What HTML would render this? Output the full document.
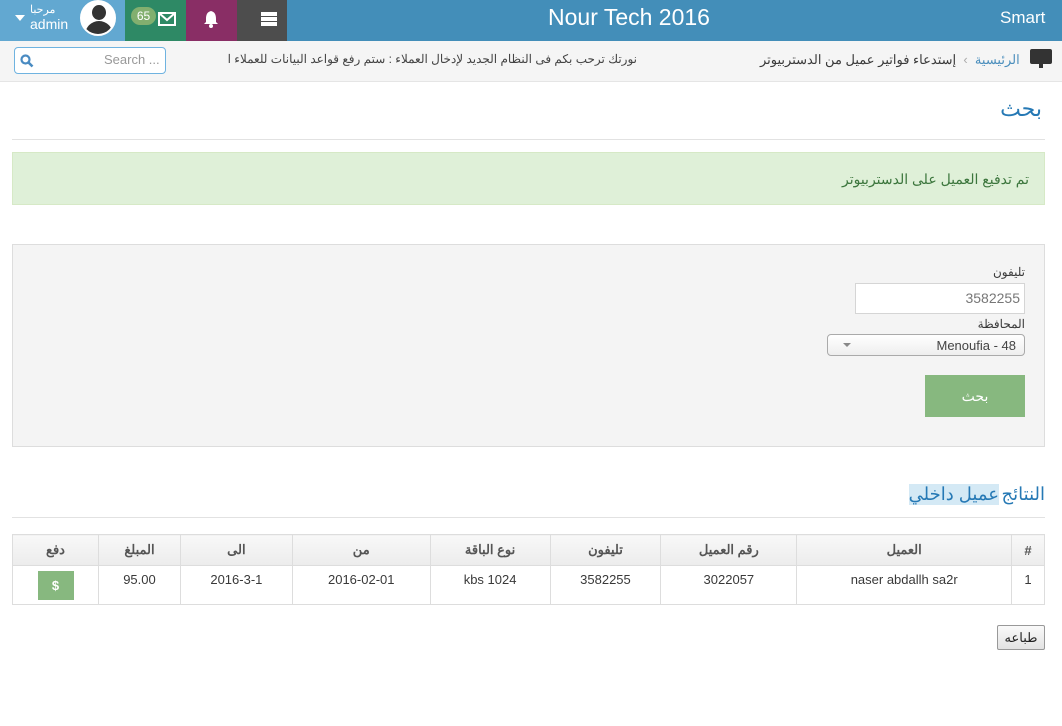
<!DOCTYPE html>
<html><head><meta charset="utf-8"><style>
*{box-sizing:border-box;margin:0;padding:0}
body{width:1062px;height:726px;overflow:hidden;background:#fff;font-family:"Liberation Sans","Noto Sans CJK SC",sans-serif;font-size:13px;color:#393939;position:relative}
.abs{position:absolute}
.hdr{left:0;top:0;width:1062px;height:41px;background:#438eb9}
table{border-collapse:collapse;position:absolute;left:12px;top:534px;width:1033px;direction:rtl}
td,th{border:1px solid #ddd;text-align:center;font-size:13px}
th{height:31px;background:linear-gradient(#f8f8f8,#ececec);font-weight:bold;color:#555}
td{height:39px;background:#fff}
</style></head><body>
<div class="abs hdr"></div>
<div class="abs" style="left:0;top:0;width:125px;height:41px;background:#62a8d1"></div>
<div class="abs" style="left:15px;top:15px;width:0;height:0;border-left:5px solid transparent;border-right:5px solid transparent;border-top:6px solid #fff"></div>
<div class="abs" style="left:30px;top:4px;color:#fff;font-size:11px;line-height:12px">مرحبا</div>
<div class="abs" style="left:30px;top:16px;color:#fff;font-size:14px">admin</div>
<div class="abs" style="left:80px;top:0;width:36px;height:36px;border-radius:50%;background:#fff;border:2px solid #fff;overflow:hidden">
<div class="abs" style="left:10px;top:3px;width:14px;height:15px;border-radius:50%;background:#333"></div>
<div class="abs" style="left:3px;top:19px;width:28px;height:20px;border-radius:14px 14px 0 0;background:#333"></div></div>
<div class="abs" style="left:125px;top:0;width:61px;height:41px;background:#2e8965"></div>
<div class="abs" style="left:131px;top:7px;width:25px;height:18px;border-radius:9px;background:#82af6f;color:#fff;font-size:12px;text-align:center;line-height:18px">65</div>
<svg class="abs" style="left:158px;top:12px" width="18" height="14" viewBox="0 0 18 14"><rect x="1" y="1" width="16" height="12" fill="none" stroke="#fff" stroke-width="2"/><path d="M1 1 L9 8 L17 1" fill="none" stroke="#fff" stroke-width="2"/></svg>
<div class="abs" style="left:186px;top:0;width:51px;height:41px;background:#892e65"></div>
<svg class="abs" style="left:203px;top:11px" width="16" height="17" viewBox="0 0 16 17"><path d="M8 0 C4 1 3 4 3 8 L3 11 L1 13 L15 13 L13 11 L13 8 C13 4 12 1 8 0Z" fill="#fff"/><circle cx="8" cy="15" r="2" fill="#fff"/></svg>
<div class="abs" style="left:237px;top:0;width:50px;height:41px;background:#4d4d4d"></div>
<div class="abs" style="left:261px;top:12px;width:16px;height:4px;background:#fff"></div>
<div class="abs" style="left:261px;top:17px;width:16px;height:4px;background:#fff"></div>
<div class="abs" style="left:261px;top:22px;width:16px;height:4px;background:#fff"></div>
<div class="abs" style="left:548px;top:4px;color:#fff;font-size:23px">Nour Tech 2016</div>
<div class="abs" style="left:1000px;top:8px;color:#fff;font-size:17px">Smart</div>
<div class="abs" style="left:0;top:41px;width:1062px;height:41px;background:#f5f5f5;border-bottom:1px solid #e5e5e5"></div>
<div class="abs" style="left:14px;top:47px;width:152px;height:27px;border:1px solid #6fb3e0;border-radius:4px;background:#fff"></div>
<svg class="abs" style="left:20px;top:54px" width="14" height="14" viewBox="0 0 14 14"><circle cx="5.5" cy="5.5" r="4" fill="none" stroke="#4a8bc2" stroke-width="2.2"/><path d="M8.5 8.5 L12.5 12.5" stroke="#4a8bc2" stroke-width="2.6"/></svg>
<div class="abs" style="left:104px;top:52px;color:#999;font-size:13px">Search ...</div>
<div class="abs" style="left:205px;top:52px;font-size:12px;color:#444;direction:rtl;width:432px;white-space:nowrap;overflow:hidden">نورتك ترحب بكم فى النظام الجديد لإدخال العملاء : ستم رفع قواعد البيانات للعملاء ا</div>
<div class="abs" style="left:1030px;top:49px;width:22px;height:15px;background:#333;border-radius:2px"></div>
<div class="abs" style="left:1039px;top:63px;width:4px;height:5px;background:#333"></div>
<div class="abs" style="left:760px;top:52px;font-size:13px;direction:rtl;white-space:nowrap"><span style="color:#4c8fbd">الرئيسية</span> <span style="color:#aaa">&nbsp;›&nbsp;</span> إستدعاء فواتير عميل من الدستربيوتر</div>
<div class="abs" style="right:20px;top:96px;color:#2679b5;font-size:22px;direction:rtl">بحث</div>
<div class="abs" style="left:12px;top:139px;width:1033px;height:1px;background:#e2e2e2"></div>
<div class="abs" style="left:12px;top:152px;width:1033px;height:53px;background:#dff0d8;border:1px solid #d6e9c6"></div>
<div class="abs" style="right:33px;top:171px;color:#3c763d;font-size:14px;direction:rtl">تم تدفيع العميل على الدستربيوتر</div>
<div class="abs" style="left:12px;top:244px;width:1033px;height:203px;background:#f4f4f4;border:1px solid #ddd"></div>
<div class="abs" style="right:37px;top:265px;font-size:12px;direction:rtl">تليفون</div>
<div class="abs" style="left:855px;top:283px;width:170px;height:31px;background:#fff;border:1px solid #d5d5d5;text-align:right;padding:6px 4px;color:#777;font-size:14px">3582255</div>
<div class="abs" style="right:37px;top:317px;font-size:12px;direction:rtl">المحافظة</div>
<div class="abs" style="left:827px;top:334px;width:198px;height:22px;background:linear-gradient(#fff,#eee);border:1px solid #aaa;border-radius:4px;text-align:right;padding:3px 8px;font-size:13px;color:#444">Menoufia - 48</div>
<div class="abs" style="left:843px;top:343px;border-left:4px solid transparent;border-right:4px solid transparent;border-top:4px solid #888"></div>
<div class="abs" style="left:925px;top:375px;width:100px;height:42px;background:#87b87f;color:#fff;text-align:center;line-height:42px;font-size:14px">بحث</div>
<div class="abs" style="right:17px;top:484px;font-size:18px;direction:rtl;color:#2679b5;white-space:nowrap">النتائج</div>
<div class="abs" style="right:63px;top:484px;font-size:18px;direction:rtl;color:#2679b5;white-space:nowrap;background:#d4e9f5">عميل داخلي</div>
<div class="abs" style="left:12px;top:517px;width:1033px;height:1px;background:#e2e2e2"></div>
<table>
<colgroup><col style="width:33px"><col style="width:215px"><col style="width:136px"><col style="width:111px"><col style="width:120px"><col style="width:138px"><col style="width:112px"><col style="width:82px"><col style="width:86px"></colgroup>
<tr><th>#</th><th>العميل</th><th>رقم العميل</th><th>تليفون</th><th>نوع الباقة</th><th>من</th><th>الى</th><th>المبلغ</th><th>دفع</th></tr>
<tr><td style="vertical-align:top;padding-top:6px">1</td><td style="vertical-align:top;padding-top:6px">naser abdallh sa2r</td><td style="vertical-align:top;padding-top:6px">3022057</td><td style="vertical-align:top;padding-top:6px">3582255</td><td style="vertical-align:top;padding-top:6px">kbs 1024</td><td style="vertical-align:top;padding-top:6px">2016-02-01</td><td style="vertical-align:top;padding-top:6px">2016-3-1</td><td style="vertical-align:top;padding-top:6px">95.00</td><td><span style="display:inline-block;width:36px;height:29px;background:#87b87f;color:#fff;font-weight:bold;line-height:29px">$</span></td></tr>
</table>
<div class="abs" style="left:997px;top:625px;width:48px;height:25px;border:1px solid #999;background:linear-gradient(#fafafa,#e3e3e3);border-radius:2px;text-align:center;line-height:23px;font-size:13px;color:#222">طباعه</div>
</body></html>
